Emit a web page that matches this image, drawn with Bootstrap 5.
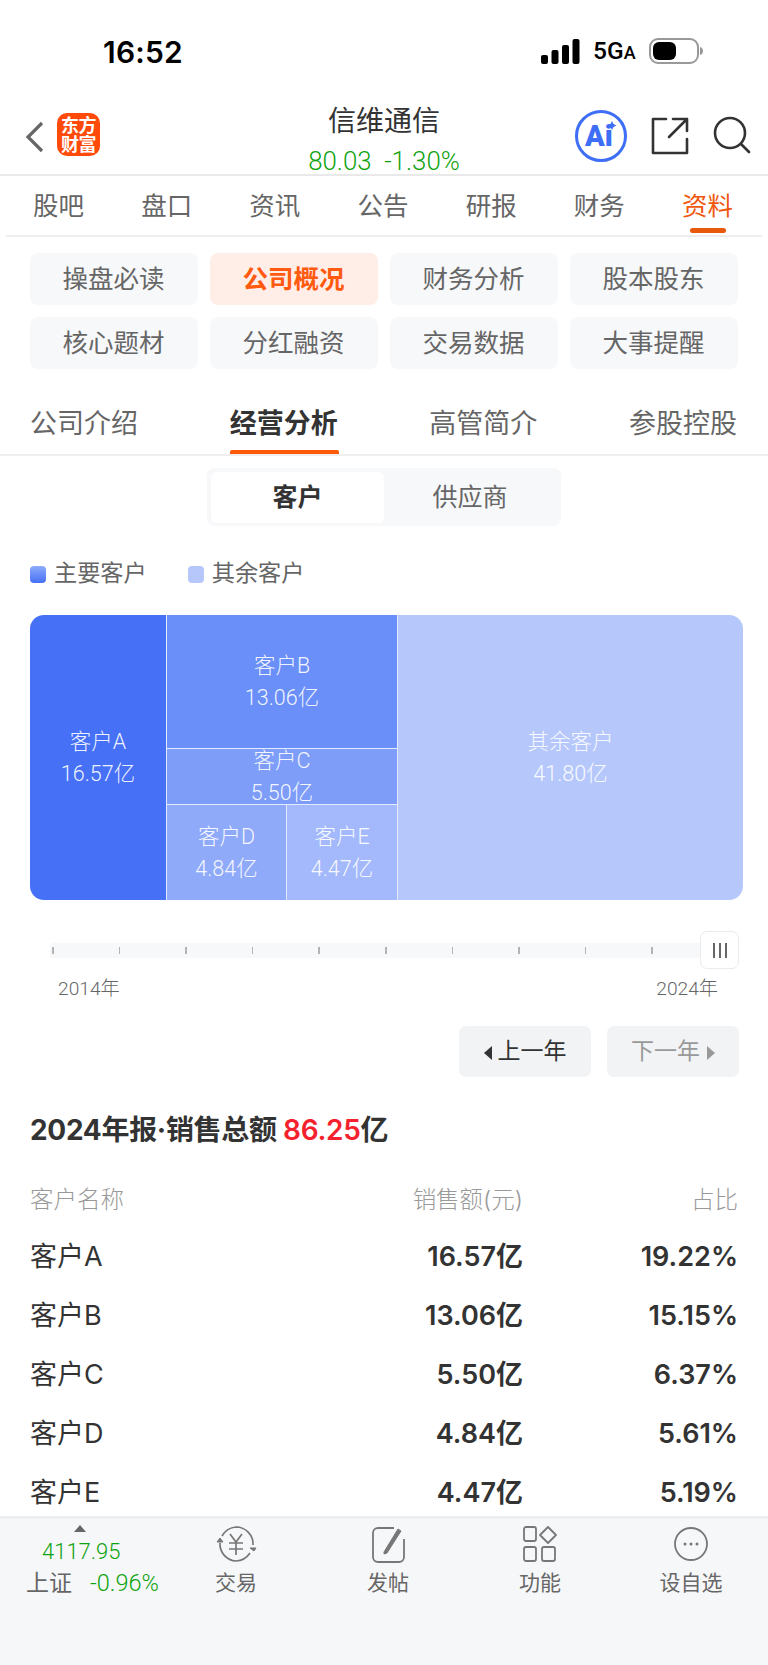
<!DOCTYPE html>
<html lang="zh-CN">
<head>
  <meta charset="UTF-8">
  <meta name="viewport" content="width=device-width, initial-scale=1.0">
  <title>信维通信 资料</title>
  <link href="https://cdn.jsdelivr.net/npm/bootstrap@5.3.0/dist/css/bootstrap.min.css" rel="stylesheet">
  <style>
    body {
      font-family: Roboto, "Noto Sans CJK SC", sans-serif;
      background-color: #fff;
      color: #333;
      margin: 0;
    }

    .app-page { width: 768px; height: 1665px; overflow: hidden; }
    .app-main { flex: 1 1 auto; min-height: 0; overflow: hidden; }

    /* status bar */
    .status-bar { height: 105px; padding: 0 65px 0 103px; }
    .status-row { height: 105px; }
    .status-time { font-family: Inter, sans-serif; font-size: 30px; font-weight: 600; color: #000; line-height: 1; letter-spacing: .2px; }
    .status-net { font-family: Roboto, sans-serif; font-size: 24.5px; font-weight: 500; color: #000; line-height: 1; margin: 0 13px; width: 43px; white-space: nowrap; }
    .status-net small { font-size: 18px; font-weight: 500; }

    /* top bar */
    .top-bar { height: 71px; position: relative; border-bottom: 2px solid #e9e9e9; padding-left: 25px; padding-right: 17px; }
    .app-logo { width: 43px; height: 43px; border-radius: 10px; background-color: #ff4a0a; color: #fff; font-size: 18px; font-weight: 700; line-height: 19px; text-align: center; margin-left: 12px; padding-top: 3px; letter-spacing: -.5px; white-space: nowrap; }
    .top-title { position: absolute; left: 0; right: 0; top: 0; text-align: center; }
    .stock-name { font-size: 28px; line-height: 32px; margin-top: 1px; color: #333; }
    .stock-price { font-size: 25.8px; line-height: 28px; margin-top: 9px; color: #0fa30f; font-weight: 300; white-space: pre; }

    /* tabs */
    .main-tabs { height: 61px; margin: 0 6px; border-bottom: 2px solid #eeeeee; padding: 0 29px 0 27px; position: relative; }
    .main-tab { font-size: 25.5px; color: #666; line-height: 1; width: 51px; white-space: nowrap; padding-top: 18px; position: relative; height: 59px; }
    .main-tab.is-active { color: #f0570f; }
    .main-tab.is-active::after { content: ""; position: absolute; left: 8px; bottom: 2px; width: 36px; height: 5px; border-radius: 3px; background-color: #e8590c; }

    .quick-grid { display: grid; grid-template-columns: repeat(4, 168px); column-gap: 12px; row-gap: 12px; padding: 16px 0 0 29.5px; }
    .quick-btn { height: 52px; border-radius: 8px; background-color: #f7f8fa; color: #666; font-size: 25.500px; line-height: 52px; padding: 0; border: 0; }
    .quick-btn.is-active { background-color: #ffeee7; color: #ff5a0f; font-weight: 700; }

    .sub-tabs { height: 87px; border-bottom: 2px solid #eeeeee; padding: 0 30px; }
    .sub-tab { font-size: 27px; color: #666; line-height: 1; height: 85px; padding-top: 42px; width: 109px; white-space: nowrap; position: relative; }
    .sub-tab.is-active { color: #333; font-weight: 700; }
    .sub-tab.is-active::after { content: ""; position: absolute; left: 0; right: 0; bottom: 0; height: 4px; border-radius: 2px 2px 0 0; background-color: #fa5a0a; }

    .seg-box { width: 354px; height: 58px; margin: 12px auto 0; padding: 4px 5px 3px 4px; background-color: #f7f8fa; border-radius: 8px; }
    .seg-item { flex: 0 0 173px; text-align: center; font-size: 25px; line-height: 51px; color: #666; border-radius: 6px; }
    .seg-item.is-active { background-color: #fff; color: #333; font-weight: 700; }
    .seg-rest { flex: 1 1 auto; }

    .legend-row { padding: 32px 0 0 30px; height: 89px; font-size: 23.2px; color: #666; line-height: 30px; }
    .legend-dot { width: 16px; height: 17px; border-radius: 4px; margin-right: 8px; }
    .legend-main { background: linear-gradient(#8fabfa, #4470f6); }
    .legend-rest { background-color: #b6c8fb; margin-left: 41px; }

    /* treemap */
    .tree-map { width: 713px; height: 285px; margin-left: 30px; border-radius: 14px; overflow: hidden; color: rgba(255,255,255,.92); font-size: 21.5px; line-height: 32px; text-align: center; font-weight: 300; }
    .tree-cell { display: flex; flex-direction: column; justify-content: center; min-height: 0; overflow: hidden; }
    .cell-a { width: 137px; background-color: #4671f7; border-right: 1.5px solid #e4eafe; }
    .tree-mid { width: 231px; border-right: 1.5px solid #e4eafe; }
    .cell-b { height: 134px; background-color: #6b8ff8; border-bottom: 1.5px solid #e4eafe; }
    .cell-c { height: 56px; background-color: #7d9df9; border-bottom: 1.5px solid #e4eafe; }
    .tree-low { height: 95px; }
    .cell-d { width: 120px; background-color: #90aafa; border-right: 1.5px solid #e4eafe; }
    .cell-e { flex: 1 1 auto; background-color: #a3b9fb; }
    .cell-rest { flex: 1 1 auto; background-color: #b6c8fb; }

    /* year slider */
    .year-slider { height: 38px; margin: 31px 29px 0 50px; position: relative; }
    .slider-track { height: 15px; background-color: #f7f8fa; border-radius: 3px; padding: 4px 67px 0 2px; margin-right: 19px; }
    .slider-tick { width: 1.5px; height: 7px; background-color: #b4b4b4; }
    .slider-handle { position: absolute; right: 0; top: 0; width: 39px; height: 38px; background-color: #fff; border: 1px solid #ebebeb; border-radius: 7px; gap: 4px; }
    .handle-bar { width: 2px; height: 15px; background-color: #666; }
    .year-labels { padding: 7px 50px 0 58px; font-size: 19.2px; line-height: 26px; color: #666; font-weight: 300; }

    .year-btns { padding: 24px 29px 0 0; gap: 16px; }
    .year-btn { width: 132px; height: 51px; border-radius: 7px; background-color: #f2f3f5; border: 0; font-size: 23px; line-height: 51px; padding: 0; color: #333; }
    .year-btn.is-off { color: #999; }
    .btn-tri { display: inline-block; width: 0; height: 0; border-top: 7px solid transparent; border-bottom: 7px solid transparent; vertical-align: -1px; }
    .tri-left { border-right: 8px solid #333; margin-right: 6px; }
    .tri-right { border-left: 8px solid #999; margin-left: 7px; }

    .report-title { font-family: Inter, "Noto Sans CJK SC", sans-serif; font-size: 28px; font-weight: 700; line-height: 36px; margin: 35px 0 0 30px; color: #333; white-space: nowrap; letter-spacing: -.3px; }
    .report-title span { color: #f5222d; font-weight: 600; }

    /* customer table */
    .cust-table { width: 708px; margin: 23px 0 0 30px; table-layout: fixed; font-family: Inter, "Noto Sans CJK SC", sans-serif; }
    .cust-table th, .cust-table td { padding: 0; border: 0; vertical-align: middle; background: transparent; height: 59px; }
    .cust-table th { font-size: 23.5px; font-weight: 300; color: #999; height: 57px; }
    .cust-table td { font-size: 27px; color: #333; font-weight: 600; }
    .cust-table td:first-child { font-weight: 400; }
    .col-name { width: 300px; }
    .col-sale { width: 193px; }

    /* bottom bar */
    .bottom-bar { flex: 0 0 149px; background-color: #f6f7f9; border-top: 3px solid #eceef0; position: relative; padding-left: 20px; }
    .index-box { width: 150px; color: #666; }
    .index-tri { width: 0; height: 0; margin: 6px 0 0 54px; border-left: 6px solid transparent; border-right: 6px solid transparent; border-bottom: 7px solid #666; }
    .index-val { font-size: 22px; line-height: 28px; margin: 6px 0 0 22px; color: #0fa30f; font-weight: 300; }
    .index-sub { font-size: 23px; line-height: 28px; margin: 3px 0 0 6px; white-space: nowrap; }
    .index-sub span { color: #0fa30f; font-size: 23.5px; margin-left: 18px; font-weight: 300; }
    .bar-item { position: absolute; top: 6px; width: 100px; text-align: center; color: #666; font-size: 21px; line-height: 28px; }
    .bar-item svg { display: block; margin: 0 auto 6px; }
    .bar-a { left: 186px; }
    .bar-b { left: 338px; }
    .bar-c { left: 490px; }
    .bar-d { left: 641px; }
  </style>
</head>
<body>
  <div class="app-page d-flex flex-column">
    <div class="app-main">
      <!-- status bar -->
      <div class="status-bar">
        <div class="status-row d-flex align-items-start justify-content-between">
          <div class="status-time" style="margin-top:37px">16:52</div>
          <div class="d-flex align-items-center" style="margin-top:38px">
            <svg width="39" height="25" viewBox="0 0 39 25">
              <rect x="0" y="16" width="7" height="9" rx="2" fill="#000"/>
              <rect x="10.5" y="11" width="7" height="14" rx="2" fill="#000"/>
              <rect x="21" y="6" width="7" height="19" rx="2" fill="#000"/>
              <rect x="31.5" y="0" width="7" height="25" rx="2" fill="#000"/>
            </svg>
            <div class="status-net">5G<small>A</small></div>
            <svg width="54" height="26" viewBox="0 0 54 26">
              <rect x="1" y="1" width="48" height="24" rx="8" fill="#fff" stroke="#999" stroke-width="2"/>
              <rect x="4" y="4" width="23" height="18" rx="6" fill="#000"/>
              <path d="M51 9c2 .5 3 2 3 4s-1 3.500-3 4z" fill="#999"/>
            </svg>
          </div>
        </div>
      </div>

      <!-- top bar -->
      <div class="top-bar d-flex align-items-start">
        <svg class="mt-3" width="20" height="32" viewBox="0 0 20 32"><path d="M17 2 3 16l14 14" fill="none" stroke="#666" stroke-width="3.200"/></svg>
        <div class="app-logo" style="margin-top:8px">东方<br>财富</div>
        <div class="top-title">
          <div class="stock-name">信维通信</div>
          <div class="stock-price">80.03  -1.30%</div>
        </div>
        <div class="ms-auto d-flex align-items-start">
          <svg width="52" height="52" viewBox="0 0 52 52" style="margin-top:5px">
            <circle cx="26" cy="26" r="24.500" fill="#fff" stroke="#3d6ef5" stroke-width="3"/>
            <text x="10" y="36" font-family="Roboto, sans-serif" font-size="29" font-weight="900" fill="#3d6ef5">Ai</text>
            <path d="M37 11l1.500 3 3 1.500-3 1.500-1.500 3-1.500-3-3-1.500 3-1.500z" fill="#3d6ef5"/>
          </svg>
          <svg width="38" height="38" viewBox="0 0 38 38" style="margin:12px 0 0 24px">
            <path d="M15 2H2v34h34V22M22 2h14v12M36 2 18 20" fill="none" stroke="#333" stroke-width="2.600" stroke-linejoin="round" stroke-linecap="round"/>
          </svg>
          <svg width="38" height="38" viewBox="0 0 38 38" style="margin:11px 0 0 24px">
            <circle cx="17" cy="17" r="15" fill="none" stroke="#333" stroke-width="2.600"/>
            <path d="M28 28l8 8" stroke="#333" stroke-width="2.600" stroke-linecap="round"/>
          </svg>
        </div>
      </div>

      <!-- tabs -->
      <div class="main-tabs d-flex justify-content-between">
        <div class="main-tab">股吧</div>
        <div class="main-tab">盘口</div>
        <div class="main-tab">资讯</div>
        <div class="main-tab">公告</div>
        <div class="main-tab">研报</div>
        <div class="main-tab">财务</div>
        <div class="main-tab is-active">资料</div>
      </div>

      <div class="quick-grid">
        <button class="btn quick-btn" type="button">操盘必读</button>
        <button class="btn quick-btn is-active" type="button">公司概况</button>
        <button class="btn quick-btn" type="button">财务分析</button>
        <button class="btn quick-btn" type="button">股本股东</button>
        <button class="btn quick-btn" type="button">核心题材</button>
        <button class="btn quick-btn" type="button">分红融资</button>
        <button class="btn quick-btn" type="button">交易数据</button>
        <button class="btn quick-btn" type="button">大事提醒</button>
      </div>

      <div class="sub-tabs d-flex justify-content-between">
        <div class="sub-tab">公司介绍</div>
        <div class="sub-tab is-active">经营分析</div>
        <div class="sub-tab">高管简介</div>
        <div class="sub-tab">参股控股</div>
      </div>

      <div class="seg-box d-flex">
        <div class="seg-item is-active">客户</div>
        <div class="seg-item seg-rest">供应商</div>
      </div>

      <div class="legend-row d-flex align-items-start">
        <span class="legend-dot legend-main mt-2"></span><span>主要客户</span>
        <span class="legend-dot legend-rest mt-2"></span><span>其余客户</span>
      </div>

      <!-- treemap -->
      <div class="tree-map d-flex">
        <div class="tree-cell cell-a"><div>客户A</div><div>16.57亿</div></div>
        <div class="tree-mid d-flex flex-column">
          <div class="tree-cell cell-b"><div>客户B</div><div>13.06亿</div></div>
          <div class="tree-cell cell-c"><div>客户C</div><div>5.50亿</div></div>
          <div class="tree-low d-flex">
            <div class="tree-cell cell-d"><div>客户D</div><div>4.84亿</div></div>
            <div class="tree-cell cell-e"><div>客户E</div><div>4.47亿</div></div>
          </div>
        </div>
        <div class="tree-cell cell-rest"><div>其余客户</div><div>41.80亿</div></div>
      </div>

      <!-- year slider -->
      <div class="year-slider d-flex align-items-center">
        <div class="slider-track flex-grow-1 d-flex justify-content-between" id="sliderTrack"></div>
        <div class="slider-handle d-flex align-items-center justify-content-center">
          <span class="handle-bar"></span><span class="handle-bar"></span><span class="handle-bar"></span>
        </div>
      </div>
      <div class="year-labels d-flex justify-content-between"><span>2014年</span><span>2024年</span></div>

      <div class="year-btns d-flex justify-content-end">
        <button class="btn year-btn" type="button"><span class="btn-tri tri-left"></span>上一年</button>
        <button class="btn year-btn is-off" type="button">下一年<span class="btn-tri tri-right"></span></button>
      </div>

      <div class="report-title">2024年报·销售总额 <span>86.25</span>亿</div>

      <table class="table table-borderless cust-table mb-0">
        <thead>
          <tr><th class="col-name">客户名称</th><th class="col-sale text-end">销售额(元)</th><th class="text-end">占比</th></tr>
        </thead>
        <tbody id="custRows"></tbody>
      </table>
    </div>

    <!-- bottom bar -->
    <div class="bottom-bar">
      <div class="index-box">
        <div class="index-tri"></div>
        <div class="index-val">4117.95</div>
        <div class="index-sub">上证<span>-0.96%</span></div>
      </div>
      <div class="bar-item bar-a">
        <svg width="42" height="38" viewBox="0 0 42 38" fill="none" stroke="#777" stroke-width="1.700">
          <path d="M7 11a18 18 0 0 1 14-9 17 17 0 0 1 17 18" />
          <path d="M35 28a18 18 0 0 1-14 8 17 17 0 0 1-16-18"/>
          <path d="M2 17l3-4 3 4zM35 23l4 3 2-3z" fill="#777" stroke-width="1"/>
          <path d="M15 9l6 8 6-8M14 18h14M14 24h14M21 17v13"/>
        </svg>
        交易
      </div>
      <div class="bar-item bar-b">
        <svg width="36" height="38" viewBox="0 0 36 38" fill="none" stroke="#777" stroke-width="1.800">
          <path d="M24 3H8a5 5 0 0 0-5 5v24a5 5 0 0 0 5 5h21a5 5 0 0 0 5-5V14"/>
          <path d="M14 27 28 4l3 2-14 22-3 1z" fill="#777" stroke-width="1"/>
        </svg>
        发帖
      </div>
      <div class="bar-item bar-c">
        <svg width="36" height="38" viewBox="0 0 36 38" fill="none" stroke="#777" stroke-width="1.800">
          <rect x="2" y="2" width="12" height="14" rx="2"/>
          <path d="M26 2l8 8-8 8-8-8z" stroke-linejoin="round"/>
          <rect x="2" y="22" width="12" height="14" rx="2"/>
          <rect x="20" y="22" width="13" height="14" rx="2"/>
        </svg>
        功能
      </div>
      <div class="bar-item bar-d">
        <svg width="36" height="38" viewBox="0 0 36 38" fill="none">
          <circle cx="18" cy="19" r="16" stroke="#777" stroke-width="1.800"/>
          <circle cx="12" cy="19" r="1.500" fill="#777"/><circle cx="18" cy="19" r="1.500" fill="#777"/><circle cx="24" cy="19" r="1.500" fill="#777"/>
        </svg>
        设自选
      </div>
    </div>
  </div>

  <script src="https://cdn.jsdelivr.net/npm/bootstrap@5.3.0/dist/js/bootstrap.bundle.min.js"></script>
  <script>
    var clientes = [
      ['客户A', '16.57亿', '19.22%'],
      ['客户B', '13.06亿', '15.15%'],
      ['客户C', '5.50亿', '6.37%'],
      ['客户D', '4.84亿', '5.61%'],
      ['客户E', '4.47亿', '5.19%']
    ];
    document.getElementById('custRows').innerHTML = clientes.map(function(c) {
      return '<tr><td>' + c[0] + '</td><td class="text-end">' + c[1] + '</td><td class="text-end">' + c[2] + '</td></tr>';
    }).join('');

    var track = document.getElementById('sliderTrack');
    for (var i = 0; i < 10; i++) {
      var tick = document.createElement('span');
      tick.className = 'slider-tick';
      track.appendChild(tick);
    }
  </script>
</body>
</html>
